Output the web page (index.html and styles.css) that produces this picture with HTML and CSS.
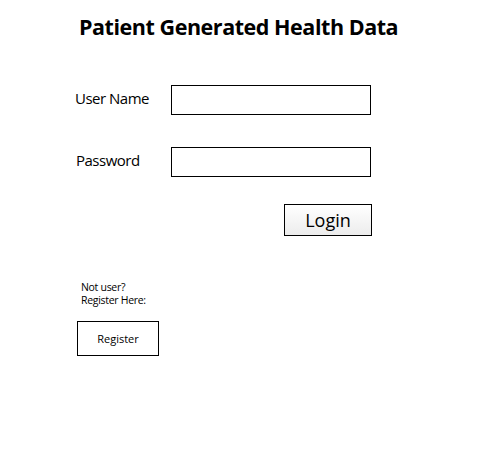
FILE: index.html
```html
<!DOCTYPE html>
<html>
<head>
<meta charset="utf-8">
<link rel="stylesheet" href="styles.css">
</head>
<body>
<div class="page">
  <h1 class="title">Patient Generated Health Data</h1>
  <div class="form">
    <div class="row row-user">
      <label class="label">User Name</label>
      <div class="input"></div>
    </div>
    <div class="row row-pass">
      <label class="label label-pass">Password</label>
      <div class="input"></div>
    </div>
    <div class="actions">
      <button class="login">Login</button>
    </div>
  </div>
  <div class="register-area">
    <div class="note">
      <span class="note-line">Not user?</span>
      <span class="note-line">Register Here:</span>
    </div>
    <button class="register">Register</button>
  </div>
</div>
</body>
</html>
```
FILE: styles.css
```css
* { box-sizing: border-box; }
body {
  margin: 0;
  background: #fff;
  font-family: "Open Sans", "Liberation Sans", sans-serif;
  color: #000;
}
.page {
  width: 502px;
  height: 466px;
  padding-top: 12px;
}
.title {
  margin: 0 0 0 79px;
  font-size: 21.5px;
  font-weight: 700;
  line-height: 30px;
  letter-spacing: -0.45px;
}
.form {
  margin-top: 43px;
  margin-left: 75px;
}
.row {
  display: flex;
  align-items: center;
}
.row-pass { margin-top: 32px; }
.label {
  width: 96px;
  font-size: 15px;
  letter-spacing: -0.5px;
  margin-top: -4px;
}
.label-pass { padding-left: 1px; }
.input {
  width: 200px;
  height: 30px;
  border: 1px solid #000;
}
.actions {
  margin-top: 27px;
  padding-left: 209px;
}
.login {
  width: 88px;
  height: 32px;
  border: 1px solid #000;
  background: linear-gradient(#ffffff, #ececec);
  font-family: inherit;
  font-size: 18px;
  color: #000;
  padding: 0;
  line-height: 30px;
}
.register-area {
  margin-top: 45px;
  margin-left: 77px;
}
.note {
  margin: 0 0 14px 4px;
  font-size: 10.5px;
  letter-spacing: -0.3px;
}
.note-line {
  display: block;
  line-height: 13px;
}
.register {
  width: 82px;
  height: 35px;
  border: 1px solid #000;
  background: #fff;
  font-family: inherit;
  font-size: 11px;
  color: #000;
  padding: 0;
}
```
